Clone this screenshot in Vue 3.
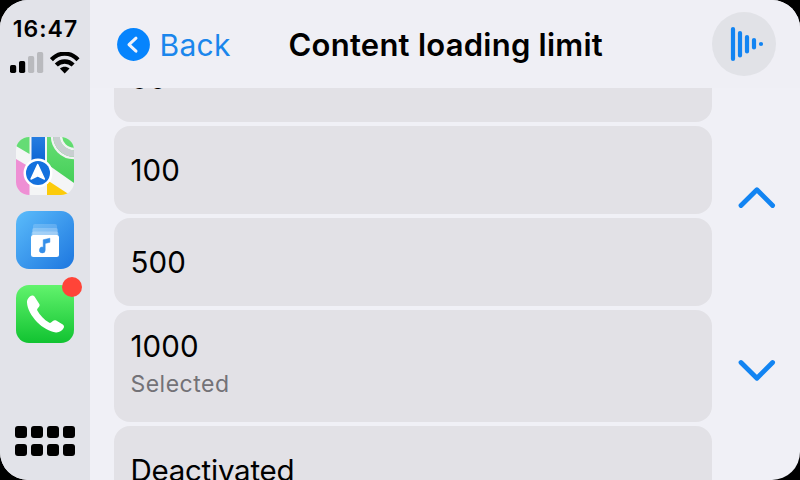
<script setup>
const options = [
  { label: '50' },
  { label: '100' },
  { label: '500' },
  { label: '1000', detail: 'Selected' },
  { label: 'Deactivated', word: true },
]
</script>

<template>
  <div class="bezel">
    <div class="screen">
      <aside class="dock">
        <time class="clock">16:47</time>
        <div class="status">
          <svg class="signal" width="34" height="22" viewBox="0 0 34 22">
            <rect x="0" y="13" width="6.2" height="8" rx="1.7" fill="#000" />
            <rect x="9" y="9" width="6.2" height="12" rx="1.7" fill="#000" />
            <rect x="18" y="4" width="6.2" height="17" rx="1.7" fill="#b9babe" />
            <rect x="27" y="0" width="6.2" height="21" rx="1.7" fill="#b9babe" />
          </svg>
          <svg class="wifi" width="30" height="22" viewBox="0 0 30 22">
            <g fill="none" stroke="#000" stroke-width="4.3">
              <path d="M1.4 7.7C9.1 -.3 20.3 -.3 28 7.7" />
              <path d="M6.3 13.1C11 8.3 18.4 8.3 23.1 13.1" />
            </g>
            <path d="M9.9 16.5C12.7 14.2 16.7 14.2 19.5 16.5L14.7 21.5Z" fill="#000" />
          </svg>
        </div>

        <nav class="apps">
          <div class="app">
            <svg width="58" height="58" viewBox="0 0 58 58">
              <defs>
                <clipPath id="maps-clip"><rect width="58" height="58" rx="13" /></clipPath>
                <linearGradient id="maps-green" x1="0" y1="0" x2="0" y2="1">
                  <stop offset="0" stop-color="#66de74" /><stop offset="1" stop-color="#45cf58" />
                </linearGradient>
                <linearGradient id="maps-road" x1="0" y1="0" x2="0" y2="1">
                  <stop offset="0" stop-color="#257de0" /><stop offset="1" stop-color="#0a62d2" />
                </linearGradient>
              </defs>
              <g clip-path="url(#maps-clip)">
                <rect width="58" height="58" fill="#f4f5f6" />
                <path d="M0 0H13.5V17L0 9Z" fill="#65dc75" />
                <path d="M0 22L13.5 30V58H0Z" fill="#ee8fd4" />
                <path d="M31 0H58V46L31 27Z" fill="url(#maps-green)" />
                <path d="M31 43L54 58H31Z" fill="#fccb0b" />
                <circle cx="58" cy="-1" r="22" fill="none" stroke="#f1f2f3" stroke-width="2.4" />
                <circle cx="58" cy="-1" r="17.5" fill="none" stroke="#c9ced1" stroke-width="6.6" />
                <circle cx="58" cy="-1" r="13" fill="none" stroke="#f1f2f3" stroke-width="2.4" />
                <path d="M15.5 0H29V28H15.5Z" fill="url(#maps-road)" />
                <circle cx="22" cy="36" r="14.5" fill="#fff" />
                <circle cx="22" cy="36" r="12" fill="#1471de" />
                <path d="M21.7 27.5L28.4 42L21.7 38.8L15 42Z" fill="#fff" stroke="#fff" stroke-width="1.4" stroke-linejoin="round" />
              </g>
            </svg>
          </div>
          <div class="app">
            <svg width="58" height="58" viewBox="0 0 58 58">
              <defs>
                <linearGradient id="music-blue" x1="0" y1="0" x2="1" y2="1">
                  <stop offset="0" stop-color="#5bbcfb" /><stop offset="1" stop-color="#1d76df" />
                </linearGradient>
              </defs>
              <rect width="58" height="58" rx="13" fill="url(#music-blue)" />
              <rect x="17" y="13" width="24" height="12" rx="2" fill="#fff" opacity=".18" />
              <rect x="16" y="17" width="26" height="12" rx="2" fill="#fff" opacity=".22" />
              <rect x="15.5" y="20.5" width="27" height="12" rx="2" fill="#fff" opacity=".25" />
              <rect x="15" y="24" width="28" height="22" rx="2.5" fill="#fff" />
              <path d="M27.2 28.8L33.9 27.2V31.3L29.2 32.4V38.9A2.9 2.9 0 1 1 27.2 36.3Z" fill="#358fe9" stroke="#358fe9" stroke-width=".5" />
            </svg>
          </div>
          <div class="app">
            <svg width="58" height="58" viewBox="0 0 58 58">
              <defs>
                <linearGradient id="phone-green" x1="0" y1="0" x2="0" y2="1">
                  <stop offset="0" stop-color="#62f36d" /><stop offset="1" stop-color="#11c331" />
                </linearGradient>
              </defs>
              <rect width="58" height="58" rx="13" fill="url(#phone-green)" />
              <path d="M16.2 10.4C13.5 10.8 10.8 14 11 17.6C11.6 30.5 27.5 46.5 40 47.4C43.4 47.6 46.7 45.6 47.8 42.8C48.3 41.5 48 40.4 46.8 39.6L40.2 35.6C39 34.9 37.8 35.1 36.9 36.1L35 37.5C34.4 38 33.7 38 33 37.6C28.3 35 23.9 30.3 21.3 25.5C20.9 24.7 21 24 21.6 23.4L22.8 21.9C23.7 21 23.9 20 23.3 18.9L18.8 11.9C18.1 10.8 17.3 10.3 16.2 10.4Z" fill="#fff" />
            </svg>
            <span class="badge"></span>
          </div>
        </nav>

        <div class="home">
          <span v-for="n in 8" :key="n" class="dot"></span>
        </div>
      </aside>

      <main class="main">
        <header class="bar">
          <div class="back">
            <svg width="33" height="33" viewBox="0 0 33 33">
              <circle cx="16.5" cy="16.5" r="16.4" fill="#0684fd" />
              <path d="M19 10.2L12 16.7L19 23.2" fill="none" stroke="#f0f2fa" stroke-width="3" stroke-linecap="round" stroke-linejoin="round" />
            </svg>
            <span class="back-label">Back</span>
          </div>
          <h1 class="title">Content loading limit</h1>
          <div class="playing">
            <svg width="64" height="64" viewBox="0 0 64 64">
              <g stroke="#1284f2" stroke-width="4.2" stroke-linecap="round">
                <path d="M21 17V47M28 21V43.5M35 25V39.5M42 28V35.5M49 32V32.01" />
              </g>
            </svg>
          </div>
        </header>
        <div class="body">
          <div class="viewport">
            <ul class="list">
              <li v-for="o in options" :key="o.label" class="row" :class="{ tall: o.detail }">
                <span class="label" :class="{ word: o.word }">{{ o.label }}</span>
                <span v-if="o.detail" class="detail">{{ o.detail }}</span>
              </li>
            </ul>
          </div>
          <div class="scroller">
            <svg width="38" height="24" viewBox="0 0 38 24">
              <path d="M3 20.5L18.9 4.7L34.6 20.5" />
            </svg>
            <svg width="38" height="24" viewBox="0 0 38 24">
              <path d="M3 3.5L18.9 19.3L34.6 3.5" />
            </svg>
          </div>
        </div>
      </main>
    </div>
  </div>
</template>

<style>
body {
  margin: 0;
  background: #000;
}
</style>

<style scoped>
.bezel {
  width: 800px;
  height: 480px;
  background: #000;
  font-family: Inter, "Liberation Sans", sans-serif;
  color: #000;
}
.screen {
  display: flex;
  width: 800px;
  height: 480px;
  border-radius: 28px;
  overflow: hidden;
  background: #f0f0f6;
}
.dock {
  box-sizing: border-box;
  width: 90px;
  height: 480px;
  padding: 16px 0 24px;
  display: flex;
  flex-direction: column;
  align-items: center;
  background: #e2e3e9;
}
.clock {
  font-size: 23px;
  line-height: 26px;
  font-weight: 560;
  letter-spacing: 1px;
  padding-left: 1px;
  white-space: nowrap;
}
.status {
  display: flex;
  gap: 6px;
  height: 22px;
  margin-top: 10px;
}
.apps {
  display: flex;
  flex-direction: column;
  gap: 16px;
  margin-top: 63px;
}
.app {
  position: relative;
  width: 58px;
  height: 58px;
}
.app svg,
.status svg,
.back svg,
.playing svg,
.scroller svg {
  display: block;
}
.badge {
  position: absolute;
  top: -8px;
  right: -8px;
  width: 20px;
  height: 20px;
  border-radius: 50%;
  background: #ff4438;
}
.home {
  display: grid;
  grid-template-columns: repeat(4, 12px);
  gap: 6px 4px;
  margin-top: auto;
}
.dot {
  height: 12px;
  border-radius: 3px;
  background: #000;
}
.main {
  width: 710px;
  height: 480px;
  display: flex;
  flex-direction: column;
}
.bar {
  box-sizing: border-box;
  height: 88px;
  padding: 1px 24px 0 27px;
  display: flex;
  align-items: center;
  background: #efeff5;
}
.back {
  display: flex;
  align-items: center;
  gap: 9.5px;
  width: 171.5px;
}
.back-label {
  padding-top: 1px;
  font-size: 30px;
  line-height: 36px;
  color: #1a86ec;
  letter-spacing: 0.3px;
}
.title {
  margin: 0;
  padding-top: 1px;
  font-size: 31px;
  line-height: 36px;
  font-weight: 580;
  letter-spacing: 0.25px;
  white-space: nowrap;
}
.playing {
  width: 64px;
  height: 64px;
  margin: -1px 0 0 auto;
  border-radius: 50%;
  background: #e1e2e7;
}
.body {
  flex: 1;
  min-height: 0;
  display: flex;
}
.viewport {
  height: 392px;
  margin-left: 24px;
  width: 598px;
  overflow: hidden;
}
.list {
  list-style: none;
  margin: -54px 0 0;
  padding: 0;
  display: flex;
  flex-direction: column;
  gap: 4px;
}
.row {
  box-sizing: border-box;
  height: 88px;
  padding: 0 16.4px;
  border-radius: 16px;
  background: #e2e1e6;
  display: flex;
  flex-direction: column;
  justify-content: center;
}
.row.tall {
  height: 112px;
  padding-bottom: 4px;
}
.label {
  font-size: 29.5px;
  line-height: 40px;
  letter-spacing: 0.1px;
}
.label.word {
  letter-spacing: -0.25px;
}
.detail {
  font-size: 23px;
  line-height: 37px;
  letter-spacing: 0.5px;
  color: #737277;
}
.scroller {
  width: 88px;
  padding: 97px 0 0 2px;
  box-sizing: border-box;
  display: flex;
  flex-direction: column;
  align-items: center;
  gap: 150px;
}
.scroller path {
  fill: none;
  stroke: #1284f2;
  stroke-width: 4.8;
  stroke-linecap: round;
  stroke-linejoin: round;
}
</style>
